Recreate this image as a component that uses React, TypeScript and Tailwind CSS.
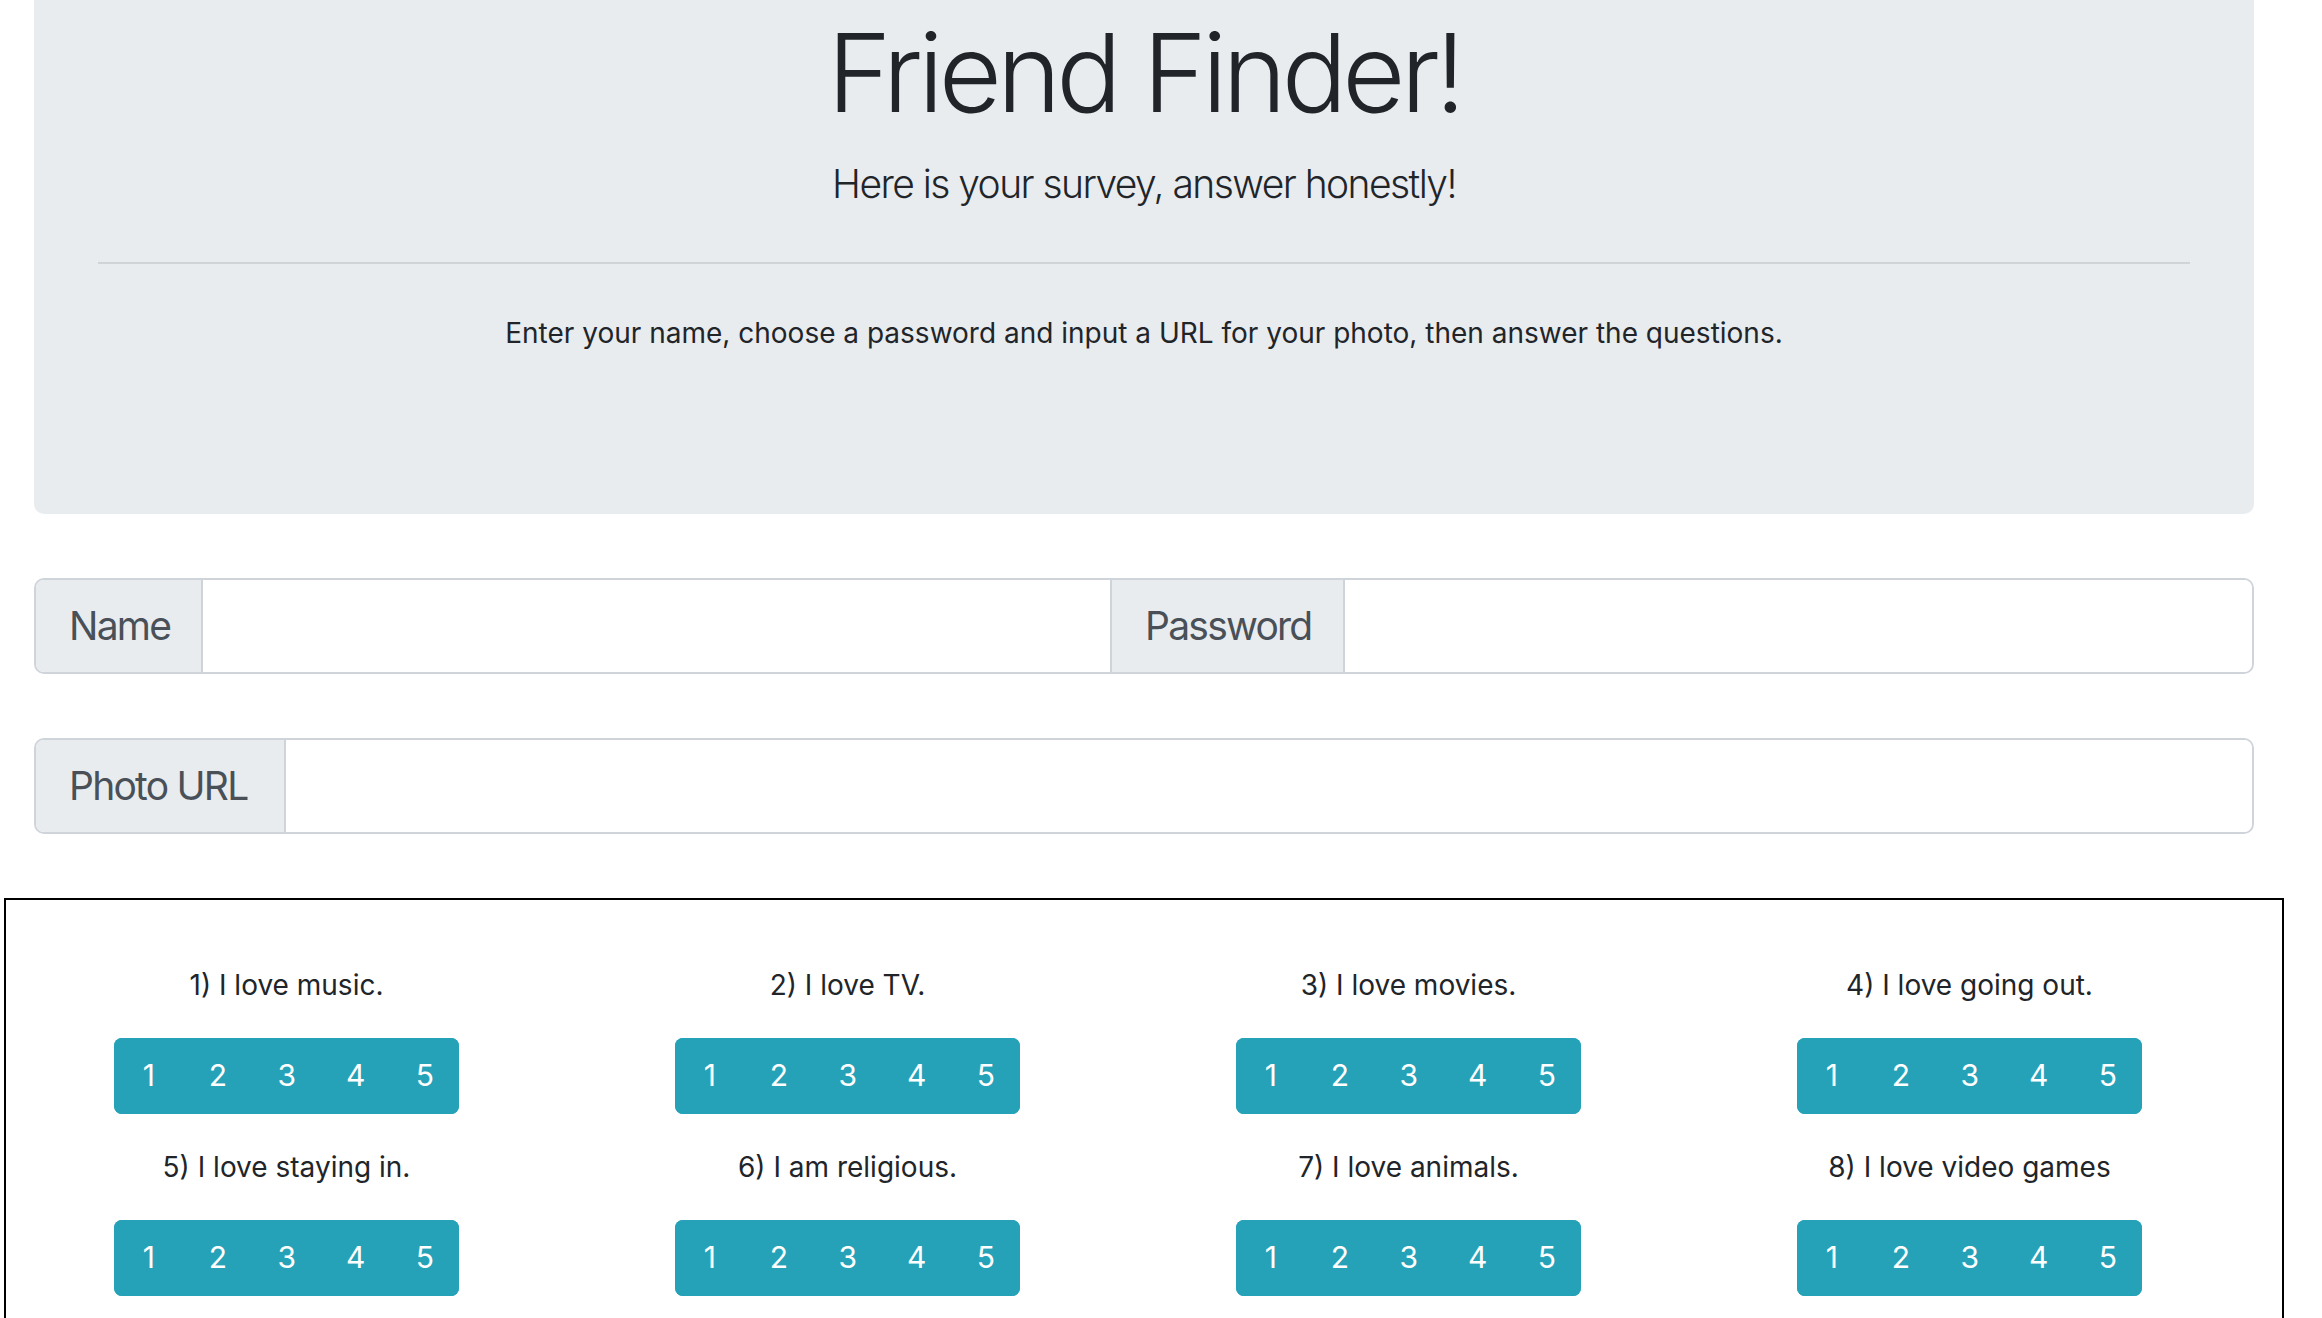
const questions = [
  '1) I love music.',
  '2) I love TV.',
  '3) I love movies.',
  '4) I love going out.',
  '5) I love staying in.',
  '6) I am religious.',
  '7) I love animals.',
  '8) I love video games',
];

const Field = ({ label, labelWidth, first }: { label: string; labelWidth: string; first?: boolean }) => (
  <>
    <div
      className={`${labelWidth} shrink-0 flex items-center pl-[33px] bg-[#e9ecef] text-[#495057] text-[39px] tracking-[-0.045em] leading-none ${first ? '' : 'border-l-2 border-[#ced4da]'} border-r-2 border-r-[#ced4da]`}
    >
      {label}
    </div>
    <input className="flex-1 min-w-0 bg-white outline-none px-[32px] text-[40px] text-[#495057]" />
  </>
);

const Question = ({ text }: { text: string }) => (
  <div className="flex flex-col items-center mb-[32px]">
    <p className="text-[28px] leading-[42px] mb-[32px]">{text}</p>
    <div className="flex h-[76px] rounded-[8px] overflow-hidden bg-[#26a2b8]">
      {[1, 2, 3, 4, 5].map((n) => (
        <button
          key={n}
          className="w-[69px] h-full flex items-center justify-center text-white text-[30px] tracking-[-0.02em] bg-[#26a2b8]"
        >
          {n}
        </button>
      ))}
    </div>
  </div>
);

export default function App() {
  return (
    <div className="min-h-screen bg-white text-[#212529] font-['Inter','Helvetica',sans-serif] overflow-hidden">
      <div className="ml-[34px] w-[2220px]">
        {/* Jumbotron */}
        <div className="bg-[#e9ecef] rounded-b-[10px] px-[64px] pt-[7px] pb-[160px] text-center">
          <h1 className="text-[109px] font-light tracking-[-0.045em] leading-[1.2] mb-[16px]">Friend Finder!</h1>
          <p className="text-[39px] font-light tracking-[-0.04em] leading-[60px]">Here is your survey, answer honestly!</p>
          <hr className="mt-[48px] mb-[48px] border-0 border-t-2 border-[#d1d4d7]" />
          <p className="text-[28px] leading-[42px]">
            Enter your name, choose a password and input a URL for your photo, then answer the questions.
          </p>
        </div>

        {/* Name / password */}
        <div className="mt-[64px] flex h-[96px] border-2 border-[#ced4da] rounded-[10px] overflow-hidden">
          <Field label="Name" labelWidth="w-[167px]" first />
          <Field label="Password" labelWidth="w-[235px]" />
        </div>

        {/* Photo */}
        <div className="mt-[64px] flex h-[96px] border-2 border-[#ced4da] rounded-[10px] overflow-hidden">
          <Field label="Photo URL" labelWidth="w-[250px]" first />
        </div>
      </div>

      {/* Survey */}
      <div className="ml-[4px] w-[2280px] mt-[64px] border-2 border-black pt-[64px] pb-[64px]">
        <div className="w-[2244px] grid grid-cols-4">
          {questions.map((q) => (
            <Question key={q} text={q} />
          ))}
        </div>
      </div>
    </div>
  );
}
